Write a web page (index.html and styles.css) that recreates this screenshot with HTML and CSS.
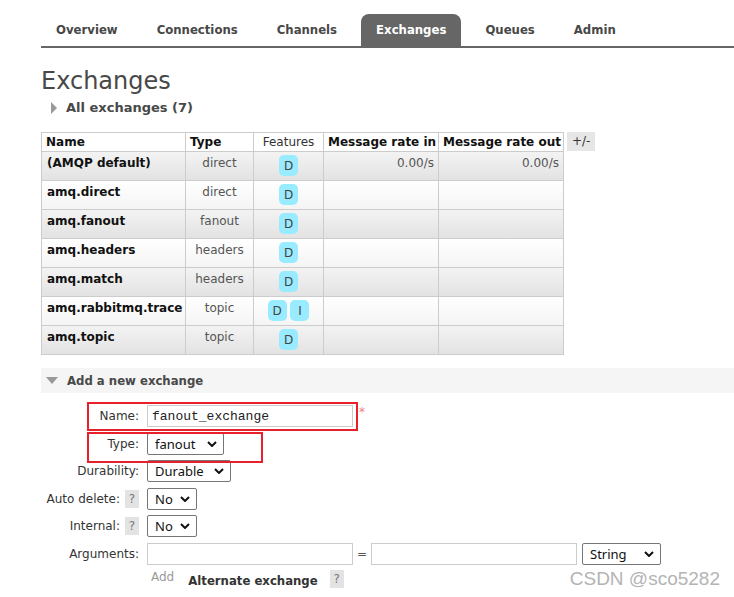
FILE: index.html
```html
<!DOCTYPE html>
<html lang="en">
<head>
  <meta charset="UTF-8" />
  <title>RabbitMQ Management - Exchanges</title>
  <link rel="stylesheet" href="styles.css">
</head>
<body>
  <div class="page">
    <ul class="tabs">
      <li>Overview</li>
      <li>Connections</li>
      <li>Channels</li>
      <li class="active">Exchanges</li>
      <li>Queues</li>
      <li>Admin</li>
    </ul>

    <h1>Exchanges</h1>
    <div class="section-head"><span class="tri-right"></span>All exchanges (7)</div>

    <div class="table-wrap">
      <table class="list">
        <thead>
          <tr>
            <th class="c-name">Name</th>
            <th class="c-type">Type</th>
            <th class="c-feat plain">Features</th>
            <th class="c-rate">Message rate in</th>
            <th class="c-rate2">Message rate out</th>
          </tr>
        </thead>
        <tbody>
          <tr class="alt">
            <td class="name">(AMQP default)</td>
            <td class="type">direct</td>
            <td class="feat"><abbr>D</abbr></td>
            <td class="rate">0.00/s</td>
            <td class="rate">0.00/s</td>
          </tr>
          <tr>
            <td class="name">amq.direct</td>
            <td class="type">direct</td>
            <td class="feat"><abbr>D</abbr></td>
            <td></td>
            <td></td>
          </tr>
          <tr class="alt">
            <td class="name">amq.fanout</td>
            <td class="type">fanout</td>
            <td class="feat"><abbr>D</abbr></td>
            <td></td>
            <td></td>
          </tr>
          <tr>
            <td class="name">amq.headers</td>
            <td class="type">headers</td>
            <td class="feat"><abbr>D</abbr></td>
            <td></td>
            <td></td>
          </tr>
          <tr class="alt">
            <td class="name">amq.match</td>
            <td class="type">headers</td>
            <td class="feat"><abbr>D</abbr></td>
            <td></td>
            <td></td>
          </tr>
          <tr>
            <td class="name">amq.rabbitmq.trace</td>
            <td class="type">topic</td>
            <td class="feat"><abbr>D</abbr> <abbr>I</abbr></td>
            <td></td>
            <td></td>
          </tr>
          <tr class="alt">
            <td class="name">amq.topic</td>
            <td class="type">topic</td>
            <td class="feat"><abbr>D</abbr></td>
            <td></td>
            <td></td>
          </tr>
        </tbody>
      </table>
      <span class="toggle">+/-</span>
    </div>

    <div class="add-bar"><span class="tri-down"></span>Add a new exchange</div>

    <form class="form">
      <label>Name:</label>
      <div class="field">
        <input class="text" type="text" value="fanout_exchange" />
        <span class="req">*</span>
      </div>

      <label>Type:</label>
      <div class="field">
        <span class="select w-type">
          <select><option>fanout</option></select>
          <svg viewBox="0 0 10 6"><path d="M1 1l4 4 4-4" /></svg>
        </span>
      </div>

      <label>Durability:</label>
      <div class="field">
        <span class="select w-dur">
          <select><option>Durable</option></select>
          <svg viewBox="0 0 10 6"><path d="M1 1l4 4 4-4" /></svg>
        </span>
      </div>

      <label>Auto delete: <span class="help">?</span></label>
      <div class="field">
        <span class="select w-no">
          <select><option>No</option></select>
          <svg viewBox="0 0 10 6"><path d="M1 1l4 4 4-4" /></svg>
        </span>
      </div>

      <label>Internal: <span class="help">?</span></label>
      <div class="field">
        <span class="select w-no">
          <select><option>No</option></select>
          <svg viewBox="0 0 10 6"><path d="M1 1l4 4 4-4" /></svg>
        </span>
      </div>

      <label>Arguments:</label>
      <div class="field">
        <input class="text" type="text" />
        <span class="eq">=</span>
        <input class="text" type="text" />
        <span class="select w-str">
          <select><option>String</option></select>
          <svg viewBox="0 0 10 6"><path d="M1 1l4 4 4-4" /></svg>
        </span>
      </div>

      <span></span>
      <div class="field extra">
        <span class="add">Add</span>
        <span class="alt-ex">Alternate exchange</span>
        <span class="help">?</span>
      </div>

      <div class="mark mark-name"></div>
      <div class="mark mark-type"></div>
    </form>

    <div class="watermark">CSDN @sco5282</div>
  </div>
</body>
</html>
```

FILE: styles.css
```css
* {
  box-sizing: border-box;
  margin: 0;
  padding: 0;
}

body {
  font-family: "DejaVu Sans", Verdana, sans-serif;
  font-size: 12px;
  color: #484848;
  background: #fff;
}

.page {
  position: relative;
  height: 597px;
  padding: 14px 0 0 41px;
  overflow: hidden;
}

/* top navigation */
.tabs {
  display: flex;
  list-style: none;
  border-bottom: 2px solid #666;
  height: 34px;
}

.tabs li {
  height: 32px;
  line-height: 32px;
  padding: 0 15px;
  margin-right: 9px;
  font-family: "DejaVu Sans Condensed", "Liberation Sans Narrow", sans-serif;
  font-weight: bold;
  font-size: 13px;
  color: #484848;
  border-radius: 8px 8px 0 0;
}

.tabs li.active {
  background: #666;
  color: #fff;
}

h1 {
  margin-top: 19px;
  font-size: 24px;
  line-height: 28px;
  font-weight: normal;
  color: #484848;
}

.section-head {
  display: flex;
  align-items: center;
  margin-top: 5px;
  padding-left: 10px;
  font-size: 13px;
  font-weight: bold;
  line-height: 16px;
}

.tri-right {
  width: 0;
  height: 0;
  border-top: 6px solid transparent;
  border-bottom: 6px solid transparent;
  border-left: 6px solid #999;
  margin-right: 9px;
}

/* exchanges table */
.table-wrap {
  display: flex;
  align-items: flex-start;
  gap: 3px;
  margin-top: 16px;
}

.list {
  border-collapse: collapse;
  table-layout: fixed;
  width: 522px;
}

.list th,
.list td {
  border: 1px solid #ccc;
  vertical-align: top;
  padding: 3px 5px 4px 5px;
  line-height: 16px;
  white-space: nowrap;
}

.list th {
  background: #fff;
  color: #111;
  text-align: left;
  padding: 1px 4px 0 4px;
  height: 19px;
}

.list th.plain {
  font-weight: normal;
  color: #333;
  text-align: center;
}

.list th.c-name { width: 144px; }
.list th.c-type { width: 68px; }
.list th.c-feat { width: 70px; }
.list th.c-rate { width: 115px; }
.list th.c-rate2 { width: 125px; }

.list tbody tr {
  background: linear-gradient(#fff, #f4f4f4);
}

.list tbody tr.alt {
  background: linear-gradient(#f3f3f3, #e2e2e2);
}

.list td.name {
  font-weight: bold;
  color: #111;
}

.list td.type {
  text-align: center;
  color: #555;
}

.list td.feat {
  text-align: center;
  padding-top: 3px;
}

.list td.rate {
  text-align: right;
  color: #555;
  padding-right: 4px;
}

.list abbr {
  display: inline-block;
  vertical-align: top;
  width: 19px;
  height: 21px;
  line-height: 23px;
  border-radius: 5px;
  background: #99ebff;
  color: #444;
  text-decoration: none;
  text-align: center;
  font-size: 12px;
}

.toggle {
  background: #e6e6e6;
  color: #333;
  padding: 0 5px;
  height: 19px;
  line-height: 19px;
}

/* add form */
.add-bar {
  display: flex;
  align-items: center;
  margin-top: 13px;
  height: 25px;
  background: #f5f5f5;
  padding-left: 5px;
  font-family: "DejaVu Sans Condensed", "Liberation Sans Narrow", sans-serif;
  font-weight: bold;
  font-size: 13px;
  color: #484848;
}

.tri-down {
  width: 0;
  height: 0;
  border-left: 6px solid transparent;
  border-right: 6px solid transparent;
  border-top: 7px solid #999;
  margin-right: 9px;
}

.form {
  position: relative;
  display: grid;
  grid-template-columns: 98px auto;
  column-gap: 8px;
  row-gap: 5.5px;
  margin-top: 12px;
  align-items: center;
}

.form label {
  display: flex;
  justify-content: flex-end;
  align-items: center;
  gap: 5px;
  color: #333;
  white-space: nowrap;
}

.field {
  display: flex;
  align-items: center;
  height: 22px;
}

.help {
  display: inline-block;
  width: 14px;
  height: 18px;
  line-height: 18px;
  text-align: center;
  background: #e3e3e3;
  color: #777;
}

.text {
  width: 206px;
  height: 22px;
  border: 1px solid #ccc;
  padding: 0 4px;
  font-family: "Liberation Mono", monospace;
  font-size: 13px;
  color: #222;
  background: #fff;
}

.req {
  color: #f08080;
  margin-left: 6px;
  align-self: flex-start;
  font-size: 12px;
}

.eq {
  width: 18px;
  text-align: center;
  color: #555;
}

.select {
  position: relative;
  display: inline-block;
  height: 22px;
}

.select select {
  appearance: none;
  -webkit-appearance: none;
  width: 100%;
  height: 22px;
  border: 1px solid #767676;
  border-radius: 2px;
  background: #fff;
  padding: 0 0 0 7px;
  font-family: "Noto Sans", "Open Sans", sans-serif;
  font-size: 13px;
  color: #111;
}

.select svg {
  position: absolute;
  right: 7px;
  top: 8px;
  width: 10px;
  height: 6px;
  fill: none;
  stroke: #111;
  stroke-width: 2;
}

.w-type { width: 77px; }
.w-dur { width: 84px; }
.w-no { width: 50px; }
.w-str { width: 79px; margin-left: 5px; }

.extra {
  height: 18px;
}

.add {
  color: #999;
  margin-left: 4px;
  align-self: flex-start;
}

.alt-ex {
  margin-left: 14px;
  margin-top: 3px;
  font-family: "DejaVu Sans Condensed", "Liberation Sans Narrow", sans-serif;
  font-weight: bold;
  font-size: 13px;
  color: #333;
}

.extra .help {
  margin-left: 12px;
}

/* screenshot annotations */
.mark {
  position: absolute;
  border: 2px solid #e8202a;
}

.mark-name {
  left: 46px;
  top: -3px;
  width: 271px;
  height: 29px;
}

.mark-type {
  left: 46px;
  top: 27px;
  width: 176px;
  height: 31px;
}

.watermark {
  position: absolute;
  right: 14px;
  bottom: 7px;
  font-family: "Liberation Sans", sans-serif;
  font-size: 19px;
  color: #b4b4b4;
}
```
